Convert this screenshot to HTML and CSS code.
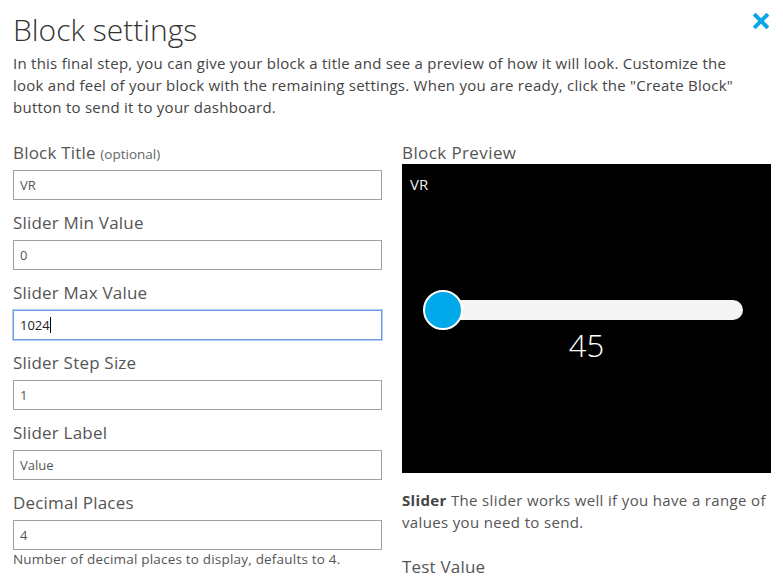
FILE: index.html
```html
<!DOCTYPE html>
<html>
<head>
<meta charset="utf-8">
<link rel="stylesheet" href="styles.css">
</head>
<body>
<div class="modal">
  <div class="header">
    <h1 class="title">Block settings</h1>
    <span class="close" aria-label="close">
      <svg width="16" height="16" viewBox="0 0 16 16"><path d="M2.5 2.5 L13.5 13.5 M13.5 2.5 L2.5 13.5" stroke="#0aa6e9" stroke-width="4" stroke-linecap="square"/></svg>
    </span>
  </div>
  <p class="intro">In this final step, you can give your block a title and see a preview of how it will look. Customize the look and feel of your block with the remaining settings. When you are ready, click the "Create Block" button to send it to your dashboard.</p>
  <div class="columns">
    <div class="form">
      <div class="field">
        <label class="label">Block Title <small>(optional)</small></label>
        <div class="input">VR</div>
      </div>
      <div class="field">
        <label class="label">Slider Min Value</label>
        <div class="input">0</div>
      </div>
      <div class="field">
        <label class="label">Slider Max Value</label>
        <div class="input focus">1024<span class="caret"></span></div>
      </div>
      <div class="field">
        <label class="label">Slider Step Size</label>
        <div class="input">1</div>
      </div>
      <div class="field">
        <label class="label">Slider Label</label>
        <div class="input">Value</div>
      </div>
      <div class="field">
        <label class="label">Decimal Places</label>
        <div class="input">4</div>
        <div class="help">Number of decimal places to display, defaults to 4.</div>
      </div>
    </div>
    <div class="side">
      <div class="label preview-label">Block Preview</div>
      <div class="preview">
        <div class="preview-title">VR</div>
        <div class="slider">
          <div class="track"></div>
          <div class="thumb"></div>
        </div>
        <div class="value">45</div>
      </div>
      <p class="desc"><b>Slider</b> The slider works well if you have a range of values you need to send.</p>
      <div class="label test">Test Value</div>
    </div>
  </div>
</div>
</body>
</html>
```
FILE: styles.css
```css
html, body {
  margin: 0;
  padding: 0;
  background: #fff;
}
body {
  font-family: "Open Sans", "Lato", sans-serif;
  color: #444;
  overflow: hidden;
}
.modal {
  padding: 0 12px 0 13px;
  width: 758px;
}
.header {
  display: flex;
  justify-content: space-between;
  align-items: flex-start;
  height: 52px;
}
.title {
  margin: 12px 0 0 0;
  font-size: 30px;
  font-weight: 300;
  color: #333;
  line-height: 36px;
}
.close {
  margin-top: 12px;
  margin-right: 2px;
  display: block;
}
.intro {
  margin: 0;
  max-width: 738px;
  font-size: 15px;
  line-height: 22px;
  color: #444;
  letter-spacing: 0.25px;
}
.columns {
  display: grid;
  grid-template-columns: 369px 369px;
  column-gap: 20px;
  margin-top: 12px;
}
.field {
  display: flex;
  flex-direction: column;
}
.label {
  font-size: 17px;
  color: #555;
  height: 32px;
  padding-top: 8px;
  line-height: 30px;
  letter-spacing: 0.2px;
}
.label small {
  font-size: 13.5px;
  color: #666;
  letter-spacing: 0;
}
.input {
  height: 28px;
  border: 1px solid #a0a0a0;
  font-size: 13px;
  line-height: 28px;
  padding-left: 6px;
  color: #555;
  box-sizing: content-box;
}
.input.focus {
  border-color: #6d98e2;
  box-shadow: 0 0 0 1px #b4cdf3;
  color: #222;
}
.caret {
  display: inline-block;
  width: 1px;
  height: 16px;
  background: #000;
  vertical-align: -3px;
}
.help {
  font-size: 13.5px;
  color: #555;
  line-height: 18px;
  letter-spacing: 0.2px;
}
.preview-label {
  height: 26px;
  letter-spacing: 0.4px;
}
.preview {
  height: 309px;
  background: #000;
  position: relative;
  display: flex;
  flex-direction: column;
}
.preview-title {
  color: #eee;
  font-size: 15px;
  padding: 12px 0 0 8px;
  line-height: 16px;
}
.slider {
  position: relative;
  margin: 98px 28px 0 23px;
  height: 40px;
}
.track {
  position: absolute;
  left: 0;
  right: 0;
  top: 10px;
  height: 20px;
  border-radius: 10px;
  background: #f5f5f5;
}
.thumb {
  position: absolute;
  left: -2px;
  top: 0;
  width: 36px;
  height: 36px;
  border-radius: 50%;
  background: #02a9ea;
  border: 2px solid #fff;
}
.value {
  color: #fff;
  text-align: center;
  font-size: 31px;
  font-weight: 300;
  line-height: 36px;
  margin-top: -3px;
}
.desc {
  margin: 16px 0 0 0;
  font-size: 15px;
  line-height: 22px;
  color: #555;
  letter-spacing: 0.35px;
}
.desc b {
  font-weight: 700;
  color: #444;
}
.test {
  margin-top: 11px;
}
```
